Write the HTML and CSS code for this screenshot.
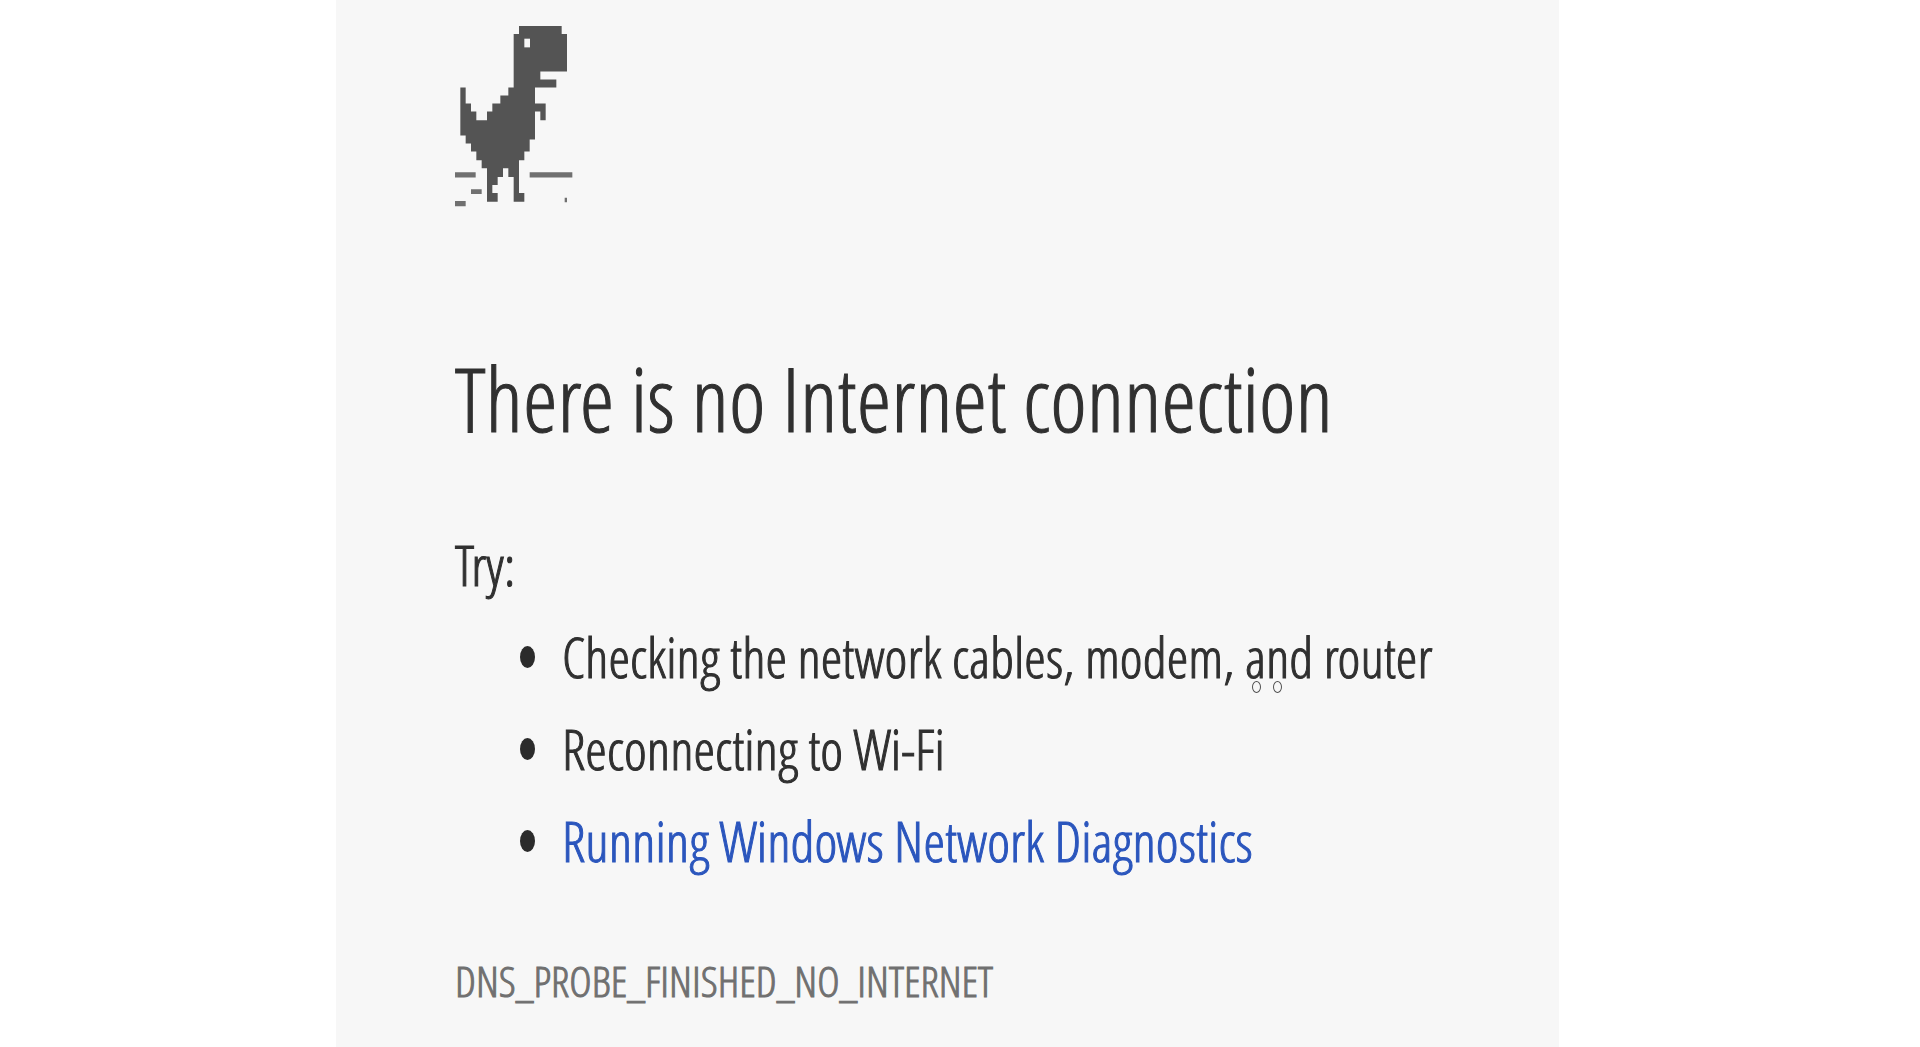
FILE: index.html
```
<!DOCTYPE html>
<html lang="en">
<head>
    <meta charset="UTF-8">
    <meta name="viewport" content="width=device-width, initial-scale=1.0">
    <title>There is no Internet connection</title>
    <link rel="stylesheet" href="styles.css">
</head>
<body>
    <main class="error-page">
        <!-- Dino -->
        <svg class="dino" viewBox="44 48 354 542" preserveAspectRatio="none" role="img" aria-label="Dinosaur">
            <path d="M236 48H364V72H380V184H300V208H348V232H284V280H316V330H300V304H284V388H268V424H252V450H236V548H252V574H220V500H204V474H188V500H172V524H156V548H172V574H140V474H124V450H108V424H92V400H76V376H60V232H76V280H92V304H108V330H140V304H156V280H180V256H204V232H220V72H236Z"/>
            <rect class="eye" x="252" y="86" width="17" height="26"/>
            <!-- Ground -->
            <path class="ground" d="M44 486H106V502H44ZM268 486H396V502H268ZM92 537H124V551H92ZM44 572H76V588H44ZM373 562H380V576H373Z"/>
        </svg>

        <h1>There is no Internet connection</h1>

        <!-- Suggestions -->
        <p class="try">Try:</p>
        <ul class="suggestions">
            <li><span>Checking the network cables, modem, <span class="marked">and<i class="dots"></i></span> router</span></li>
            <li>Reconnecting to Wi-Fi</li>
            <li><a href="#">Running Windows Network Diagnostics</a></li>
        </ul>

        <p class="error-code">DNS_PROBE_FINISHED_NO_INTERNET</p>
    </main>
</body>
</html>
```
FILE: styles.css
```
body {
    margin: 0;
    background-color: white;
    color: #303030;
    font-family: "Open Sans Condensed Light", "Open Sans", sans-serif;
    -webkit-text-stroke: 1px;
}
.error-page {
    box-sizing: border-box;
    width: 63.7%;
    min-height: 100vh;
    margin-left: 17.5%;
    padding: 26px 0 0 119px;
    background-color: #f7f7f7;
}
.dino {
    display: block;
    width: 118px;
    height: 181px;
    fill: #545454;
}
.dino .eye {
    fill: #f7f7f7;
}
.dino .ground {
    fill: #707070;
}
h1 {
    margin: 131px 0 0;
    font-size: 88px;
    font-weight: normal;
    line-height: 120px;
}
.try {
    margin: 61px 0 0;
    font-size: 55px;
    line-height: 92px;
}
.suggestions {
    margin: 0;
    padding: 0 0 0 65px;
    list-style: none;
    font-size: 55px;
    line-height: 92px;
}
.suggestions li {
    display: flex;
    align-items: center;
    gap: 27px;
}
.suggestions li::before {
    content: "";
    width: 15px;
    height: 22px;
    border-radius: 50%;
    background-color: #2b2b2b;
}
.suggestions a {
    color: #2b56bd;
    text-decoration: none;
}
.marked {
    position: relative;
}
/* two small rings under "and" */
.dots::before,
.dots::after {
    content: "";
    position: absolute;
    bottom: 1px;
    left: 7px;
    box-sizing: border-box;
    width: 9px;
    height: 12px;
    border: 1px solid #505050;
    border-radius: 50%;
}
.dots::after {
    left: 28px;
}
.error-code {
    margin: 48px 0 0;
    color: #707070;
    font-size: 43px;
    line-height: 92px;
}
```
